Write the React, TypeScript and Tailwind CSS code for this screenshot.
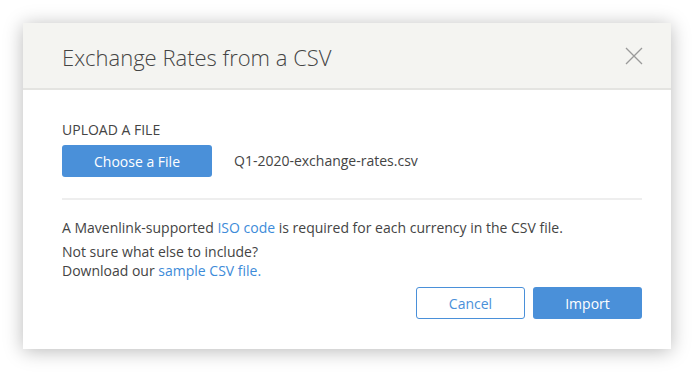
export default function App() {
  return (
    <div className="flex h-[372px] w-[694px] items-start bg-white pl-[23px] pt-[23px] font-['Open_Sans',sans-serif]">
      <div className="flex w-[648px] flex-col bg-white shadow-[0_2px_18px_rgba(0,0,0,0.28)]">
        <div className="flex h-[67px] items-center justify-between border-b-2 border-[#e4e4e1] bg-[#f4f4f1] pl-[39px] pr-[28px]">
          <h1 className="pt-[2px] text-[22px] font-light leading-[30px] text-[#444]">
            Exchange Rates from a CSV
          </h1>
          <button className="flex h-[18px] w-[18px] items-center justify-center">
            <svg width="18" height="18" viewBox="0 0 18 18" fill="none">
              <path d="M1 1L17 17M17 1L1 17" stroke="#9a9a9a" strokeWidth="1.3" />
            </svg>
          </button>
        </div>

        <div className="flex flex-col pb-[30px] pl-[39px] pr-[29px] pt-[30px] text-[14px] text-[#444]">
          <div className="leading-[20px]">UPLOAD A FILE</div>
          <div className="mt-[5px] flex items-center gap-[22px]">
            <button className="h-[32px] w-[150px] rounded-[3px] bg-[#4a90d9] text-[14px] text-white">
              Choose a File
            </button>
            <span className="leading-[20px]">Q1-2020-exchange-rates.csv</span>
          </div>

          <div className="mt-[21px] h-[2px] bg-[#eeeeee]" />

          <p className="mt-[18px] leading-[20px]">
            A Mavenlink-supported <a className="text-[#3d8bd9]">ISO code</a> is required for each
            currency in the CSV file.
          </p>
          <p className="mt-[4px] leading-[19px]">
            Not sure what else to include?
            <br />
            Download our <a className="text-[#3d8bd9]">sample CSV file.</a>
          </p>

          <div className="mt-[7px] flex justify-end gap-[8px]">
            <button className="h-[32px] w-[109px] rounded-[3px] border border-[#4a90d9] bg-white text-[14px] text-[#4a90d9]">
              Cancel
            </button>
            <button className="h-[32px] w-[109px] rounded-[3px] bg-[#4a90d9] text-[14px] text-white">
              Import
            </button>
          </div>
        </div>
      </div>
    </div>
  );
}
